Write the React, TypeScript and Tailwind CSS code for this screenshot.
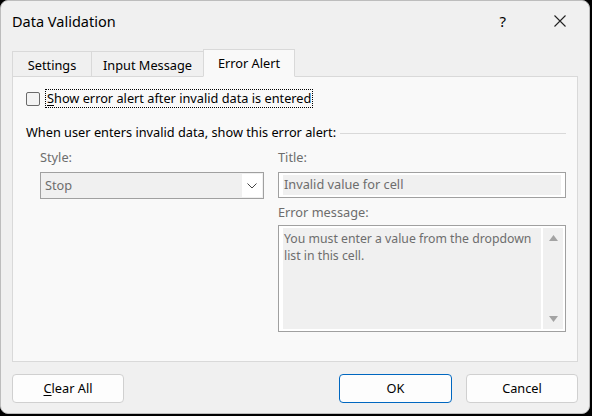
import { useState } from 'react';

const font = { fontFamily: '"Segoe UI", "Noto Sans", "Open Sans", sans-serif' };

function Chevron() {
  return (
    <svg width="10" height="6" viewBox="0 0 10 6" fill="none">
      <path d="M0.5 0.5 L5 5 L9.5 0.5" stroke="#444" strokeWidth="1" />
    </svg>
  );
}

function CloseIcon() {
  return (
    <svg width="12" height="12" viewBox="0 0 12 12" fill="none">
      <path d="M0.5 0.5 L11.5 11.5 M11.5 0.5 L0.5 11.5" stroke="#222" strokeWidth="1.1" />
    </svg>
  );
}

export default function App() {
  const [tab, setTab] = useState('error');
  const [checked, setChecked] = useState(false);

  const tabs = [
    { id: 'settings', label: 'Settings', w: 'w-[80px]' },
    { id: 'input', label: 'Input Message', w: 'w-[113px]' },
    { id: 'error', label: 'Error Alert', w: 'w-[92px]' },
  ];

  return (
    <div className="w-[592px] h-[416px] bg-black text-[12.75px] text-black" style={font}>
      <div className="w-[590px] h-[414px] bg-[#f0f0f0] rounded-lg border border-[#bdbdbd] flex flex-col overflow-hidden">
        {/* title bar */}
        <div className="h-[40px] flex items-center pl-[11px] shrink-0">
          <span className="text-[14.5px] leading-none">Data Validation</span>
          <div className="ml-auto flex items-center">
            <span className="text-[15px] leading-none mr-[48px]">?</span>
            <span className="mr-[23px] flex"><CloseIcon /></span>
          </div>
        </div>

        {/* tabs */}
        <div className="flex items-end pl-[11px] h-[35px] shrink-0">
          {tabs.map((t) => {
            const active = tab === t.id;
            return (
              <button
                key={t.id}
                onClick={() => setTab(t.id)}
                className={`${t.w} flex items-center justify-center border border-[#d9d9d9] -ml-px first:ml-0 ${
                  active
                    ? 'h-[28px] bg-[#f9f9f9] border-b-[#f9f9f9] relative z-10 -mb-px pt-[1px]'
                    : 'h-[25px] bg-[#f0f0f0] border-b-0 pt-[3px]'
                }`}
              >
                {t.label}
              </button>
            );
          })}
        </div>

        {/* panel */}
        <div className="mx-[11px] h-[286px] bg-[#f9f9f9] border border-[#d9d9d9] shrink-0 pl-[13px] pr-[11px] pt-[12px]">
          <label className="flex items-center h-[19px] cursor-default">
            <input
              type="checkbox"
              checked={checked}
              onChange={() => setChecked(!checked)}
              className="appearance-none w-[14px] h-[14px] rounded-[2px] border border-[#6a6a6a] bg-[#f3f3f3] shrink-0"
            />
            <span className="ml-[5px] h-[19px] flex items-center px-[1px] border border-dotted border-black leading-none">
              <span className="underline underline-offset-2">S</span>how error alert after invalid data is entered
            </span>
          </label>

          <div className="flex items-center mt-[16px] h-[18px]">
            <span>When user enters invalid data, show this error alert:</span>
            <div className="flex-1 h-px bg-[#d9d9d9] ml-[4px]" />
          </div>

          <div className="flex mt-[7px]">
            {/* left column */}
            <div className="ml-[14px] w-[224px]">
              <div className="h-[18px] flex items-center text-[#6d6d6d]">Style:</div>
              <div className="mt-[5px] h-[27px] border border-[#a0a0a0] bg-[#f0f0f0] flex">
                <span className="flex-1 flex items-center pl-[4px] text-[#6d6d6d]">Stop</span>
                <span className="w-[20px] bg-white flex items-center justify-center mr-px my-px">
                  <Chevron />
                </span>
              </div>
            </div>

            {/* right column */}
            <div className="ml-[14px] w-[288px]">
              <div className="h-[18px] flex items-center text-[#6d6d6d]">Title:</div>
              <div className="mt-[5px] h-[26px] border border-[#a0a0a0] bg-white pl-[4px] pr-[4px] py-[2px]">
                <div className="h-full bg-[#f0f0f0] flex items-center pl-[1px] text-[#6d6d6d]">
                  Invalid value for cell
                </div>
              </div>
              <div className="h-[18px] flex items-center text-[#6d6d6d] mt-[6px]">Error message:</div>
              <div className="mt-[3px] h-[107px] border border-[#a0a0a0] bg-white pl-[4px] py-[2px] pr-[2px] flex">
                <div className="flex-1 bg-[#f0f0f0] text-[#6d6d6d] text-[12.25px] pl-[1px] pt-[2px] leading-[17px] whitespace-nowrap overflow-hidden">
                  You must enter a value from the dropdown
                  <br />
                  list in this cell.
                </div>
                <div className="w-[20px] ml-[2px] bg-[#f0f0f0] flex flex-col items-center justify-between py-[7px]">
                  <svg width="9" height="6" viewBox="0 0 9 6">
                    <path d="M4.5 0 L9 6 L0 6 Z" fill="#a3a3a3" />
                  </svg>
                  <svg width="9" height="6" viewBox="0 0 9 6">
                    <path d="M0 0 L9 0 L4.5 6 Z" fill="#a3a3a3" />
                  </svg>
                </div>
              </div>
            </div>
          </div>
        </div>

        {/* buttons */}
        <div className="flex items-center px-[11px] mt-[12px]">
          <button className="w-[112px] h-[29px] rounded-[4px] border border-[#d0d0d0] bg-[#fdfdfd]">
            <span className="underline underline-offset-2">C</span>lear All
          </button>
          <button className="ml-auto w-[113px] h-[29px] rounded-[4px] border border-[#0067c0] bg-[#fdfdfd]">
            OK
          </button>
          <button className="ml-[14px] w-[112px] h-[29px] rounded-[4px] border border-[#d0d0d0] bg-[#fdfdfd]">
            Cancel
          </button>
        </div>
      </div>
    </div>
  );
}
